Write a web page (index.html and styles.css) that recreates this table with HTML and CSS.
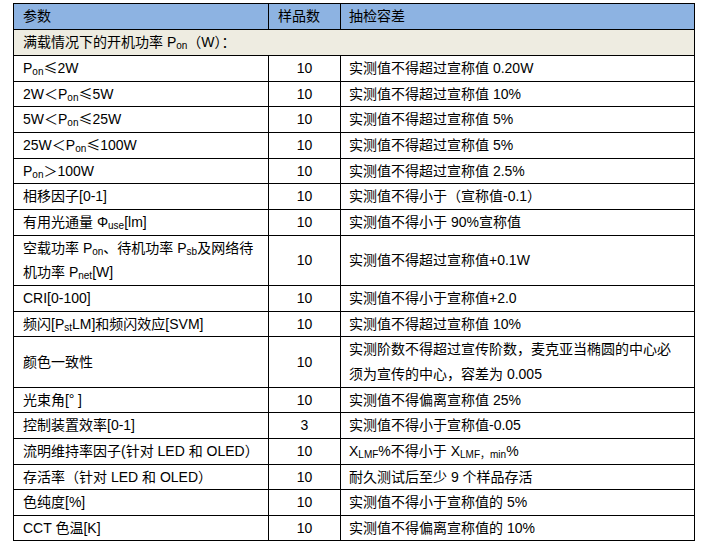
FILE: index.html
```html
<!DOCTYPE html>
<html lang="zh-CN">
<head>
<meta charset="utf-8">
<title>样品数与抽检容差</title>
<link rel="stylesheet" href="styles.css">
</head>
<body>
<table class="spec">
  <colgroup>
    <col class="c-param">
    <col class="c-count">
    <col class="c-tol">
  </colgroup>
  <thead>
    <tr class="head">
      <th>参数</th>
      <th>样品数</th>
      <th class="tol">抽检容差</th>
    </tr>
  </thead>
  <tbody>
    <tr class="section">
      <td colspan="3">满载情况下的开机功率 P<sub>on</sub>（W）：</td>
    </tr>
    <tr><td>P<sub>on</sub><span class="cjk">≤</span>2W</td><td class="num">10</td><td class="tol">实测值不得超过宣称值 0.20W</td></tr>
    <tr><td>2W＜P<sub>on</sub><span class="cjk">≤</span>5W</td><td class="num">10</td><td class="tol">实测值不得超过宣称值 10%</td></tr>
    <tr><td>5W＜P<sub>on</sub><span class="cjk">≤</span>25W</td><td class="num">10</td><td class="tol">实测值不得超过宣称值 5%</td></tr>
    <tr><td>25W＜P<sub>on</sub><span class="cjk">≤</span>100W</td><td class="num">10</td><td class="tol">实测值不得超过宣称值 5%</td></tr>
    <tr><td>P<sub>on</sub>＞100W</td><td class="num">10</td><td class="tol">实测值不得超过宣称值 2.5%</td></tr>
    <tr><td>相移因子[0-1]</td><td class="num">10</td><td class="tol">实测值不得小于（宣称值-0.1）</td></tr>
    <tr><td>有用光通量 Φ<sub>use</sub>[lm]</td><td class="num">10</td><td class="tol">实测值不得小于 90%宣称值</td></tr>
    <tr><td>空载功率 P<sub>on</sub>、待机功率 P<sub>sb</sub>及网络待<br>机功率 P<sub>net</sub>[W]</td><td class="num">10</td><td class="tol">实测值不得超过宣称值+0.1W</td></tr>
    <tr><td>CRI[0-100]</td><td class="num">10</td><td class="tol">实测值不得小于宣称值+2.0</td></tr>
    <tr><td>频闪[P<sub>st</sub>LM]和频闪效应[SVM]</td><td class="num">10</td><td class="tol">实测值不得超过宣称值 10%</td></tr>
    <tr><td>颜色一致性</td><td class="num">10</td><td class="tol">实测阶数不得超过宣传阶数，麦克亚当椭圆的中心必<br>须为宣传的中心，容差为 0.005</td></tr>
    <tr><td>光束角[<span class="cjk">°</span> ]</td><td class="num">10</td><td class="tol">实测值不得偏离宣称值 25%</td></tr>
    <tr><td>控制装置效率[0-1]</td><td class="num">3</td><td class="tol">实测值不得小于宣称值-0.05</td></tr>
    <tr><td>流明维持率因子(针对 LED 和 OLED）</td><td class="num">10</td><td class="tol">X<sub>LMF</sub>%不得小于 X<sub>LMF，min</sub>%</td></tr>
    <tr><td>存活率（针对 LED 和 OLED）</td><td class="num">10</td><td class="tol">耐久测试后至少 9 个样品存活</td></tr>
    <tr><td>色纯度[%]</td><td class="num">10</td><td class="tol">实测值不得小于宣称值的 5%</td></tr>
    <tr><td>CCT 色温[K]</td><td class="num">10</td><td class="tol">实测值不得偏离宣称值的 10%</td></tr>
  </tbody>
</table>
</body>
</html>
```
FILE: styles.css
```css
html, body {
  margin: 0;
  padding: 0;
  background: #ffffff;
}

body {
  padding: 3px 0 0 13px;
  font-family: "Liberation Sans", "Noto Sans CJK SC", sans-serif;
  font-size: 14px;
  color: #000000;
}

.spec {
  border-collapse: collapse;
  table-layout: fixed;
  width: 681px;
}

.c-param { width: 255px; }
.c-count { width: 72px; }
.c-tol { width: 354px; }

.spec th,
.spec td {
  border: 1px solid #000000;
  padding: 0 0 0 9px;
  line-height: 24.65px;
  text-align: left;
  vertical-align: middle;
  font-weight: normal;
  white-space: nowrap;
}

.spec .tol {
  padding-left: 8px;
}

.head th {
  background: #8db3e2;
  line-height: 25px;
}

.section td {
  background: #eeece1;
  line-height: 25px;
}

.spec td.num {
  text-align: center;
  padding: 0;
}

.spec sub {
  font-size: 10px;
  line-height: 0;
  vertical-align: -2px;
}

.cjk {
  font-family: "Noto Sans CJK SC", sans-serif;
  line-height: 1;
}
```
